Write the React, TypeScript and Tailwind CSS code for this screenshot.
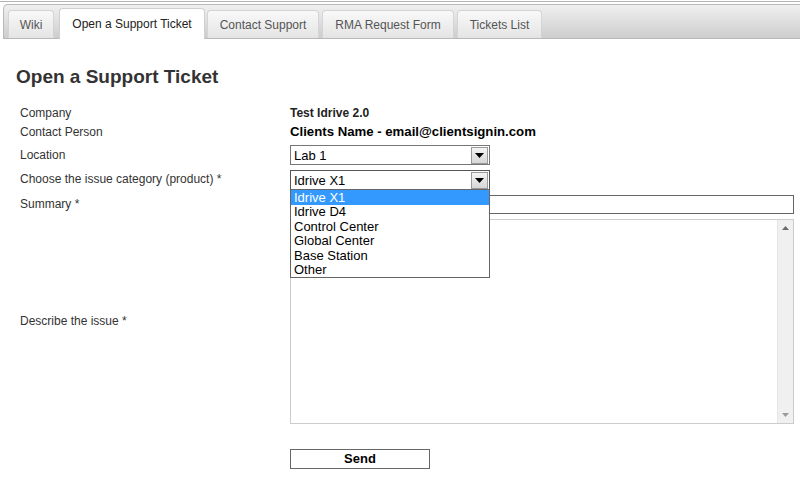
import React from "react";

const tabs = [
  { label: "Wiki", w: "w-[46px]", active: false },
  { label: "Open a Support Ticket", w: "w-[146px]", active: true },
  { label: "Contact Support", w: "w-[112px]", active: false },
  { label: "RMA Request Form", w: "w-[132px]", active: false },
  { label: "Tickets List", w: "w-[85px]", active: false },
];

const options = ["Idrive X1", "Idrive D4", "Control Center", "Global Center", "Base Station", "Other"];

function Arrow() {
  return (
    <div className="flex h-[17px] w-[17px] items-center justify-center border border-[#9a9a9a] bg-gradient-to-b from-[#f4f4f4] to-[#d6d6d6]">
      <svg width="9" height="5" viewBox="0 0 9 5">
        <polygon points="0,0 9,0 4.5,5" fill="#000" />
      </svg>
    </div>
  );
}

function Select({ value, focused }: { value: string; focused?: boolean }) {
  return (
    <div
      className={`flex h-[20px] w-[200px] items-center justify-between border ${
        focused ? "border-[#555]" : "border-[#777]"
      } bg-white pl-[3px] pr-[1px] text-[13px] text-black`}
      style={{ fontFamily: '"Liberation Sans", Arial, sans-serif' }}
    >
      <span className="leading-none">{value}</span>
      <Arrow />
    </div>
  );
}

export default function App() {
  const arial = { fontFamily: '"Liberation Sans", Arial, sans-serif' };
  return (
    <div className="h-[480px] w-[800px] overflow-hidden bg-white" style={arial}>
      {/* Tab bar */}
      <div className="mt-[1px] border-t border-[#b4b4b4]">
        <div className="ml-[3px] mt-[2px] flex h-[35px] items-end gap-[3px] rounded-tl-[5px] border-l border-t border-b border-[#b8b8b8] bg-gradient-to-b from-[#f0f0f0] to-[#cdcdcd] pl-[4px]">
          {tabs.map((t) =>
            t.active ? (
              <div
                key={t.label}
                className={`${t.w} -mb-[1px] ml-[2px] -mr-[1px] flex h-[31px] items-center justify-center rounded-t-[4px] border border-b-0 border-[#cfcfcf] bg-white text-[12px] text-[#222]`}
              >
                {t.label}
              </div>
            ) : (
              <div
                key={t.label}
                className={`${t.w} flex h-[28px] items-center justify-center rounded-t-[4px] border border-b-0 border-[#d4d4d4] bg-gradient-to-b from-[#f9f9f9] to-[#e4e4e4] text-[12px] text-[#555]`}
              >
                {t.label}
              </div>
            )
          )}
        </div>
      </div>

      {/* Heading */}
      <h1 className="mt-[26px] pl-[16px] text-[19px] font-bold leading-[24px] text-[#333]">
        Open a Support Ticket
      </h1>

      {/* Form */}
      <div className="pl-[20px] text-[12px] text-[#333]">
        <div className="mt-[15px] flex h-[18px] items-center">
          <div className="w-[270px]">Company</div>
          <div className="font-bold text-[#222]">Test Idrive 2.0</div>
        </div>
        <div className="mt-[1px] flex h-[18px] items-center">
          <div className="w-[270px]">Contact Person</div>
          <div className="text-[13.2px] font-bold text-black">Clients Name - email@clientsignin.com</div>
        </div>
        <div className="mt-[4px] flex h-[20px] items-center">
          <div className="w-[270px]">Location</div>
          <Select value="Lab 1" />
        </div>
        <div className="relative mt-[5px] flex h-[20px] items-center">
          <div className="w-[270px] pb-[3px]">Choose the issue category (product) *</div>
          <Select value="Idrive X1" focused />
          <div
            className="absolute left-[270px] top-[19px] z-10 w-[200px] border border-[#666] bg-white py-0 text-[13px] text-black"
            style={arial}
          >
            {options.map((o, i) => (
              <div
                key={o}
                className={`flex h-[14.5px] items-center pl-[3px] leading-none ${
                  i === 0 ? "bg-[#3399ff] text-white" : ""
                }`}
              >
                {o}
              </div>
            ))}
          </div>
        </div>
        <div className="mt-[5px] flex h-[19px] items-center">
          <div className="w-[270px] pb-[2px]">Summary *</div>
          <div className="h-[19px] w-[504px] border border-[#666] bg-white" />
        </div>
        <div className="mt-[5px] flex h-[205px] items-center">
          <div className="w-[270px] pb-[2px]">Describe the issue *</div>
          <div className="flex h-[205px] w-[504px] justify-end border border-[#cccccc] bg-white">
            <div className="flex w-[16px] flex-col items-center justify-between border-l border-[#e6e6e6] bg-[#f0f0f0] py-[6px]">
              <svg width="7" height="4" viewBox="0 0 7 4">
                <polygon points="0,4 7,4 3.5,0" fill="#6a6a6a" />
              </svg>
              <svg width="7" height="4" viewBox="0 0 7 4">
                <polygon points="0,0 7,0 3.5,4" fill="#9a9a9a" />
              </svg>
            </div>
          </div>
        </div>
        <div className="mt-[25px] flex h-[20px] items-center">
          <div className="w-[270px]" />
          <button className="flex h-[20px] w-[140px] items-center justify-center border border-[#666] bg-white text-[13px] font-bold text-black">
            Send
          </button>
        </div>
      </div>
    </div>
  );
}
